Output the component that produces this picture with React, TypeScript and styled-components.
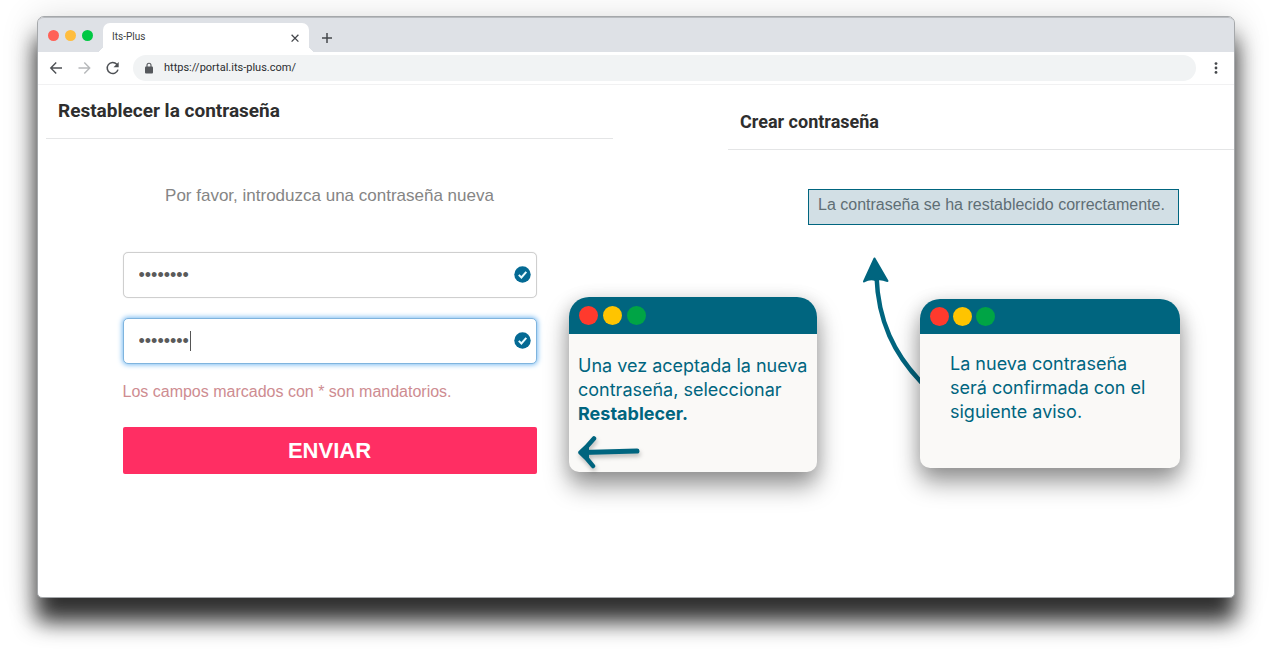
import React, { useState } from "react";
import styled, { createGlobalStyle, css } from "styled-components";

const teal = "#00657f";

const GlobalStyle = createGlobalStyle`
  *, *::before, *::after { box-sizing: border-box; }
  body {
    margin: 0;
    background: #fff;
    font-family: "Liberation Sans", Arial, sans-serif;
  }
  h1, h2, p { margin: 0; }
`;

const Page = styled.div`
  min-height: 100vh;
  padding: 16px 36px 60px 37px;
  display: flex;
  overflow: hidden;
`;

const BrowserWindow = styled.div`
  flex: 1;
  min-width: 0;
  display: flex;
  flex-direction: column;
  border: 1px solid #a5a8ab;
  border-radius: 7px 7px 5px 5px;
  background: #fff;
  box-shadow: 0 23px 22px 1px rgba(0, 0, 0, 0.8), 0 4px 34px 4px rgba(0, 0, 0, 0.12);
`;

const TabBar = styled.div`
  height: 35px;
  display: flex;
  align-items: flex-end;
  padding-left: 10px;
  background: #dee1e6;
  border-top: 1px solid #b9bcc0;
  border-radius: 6px 6px 0 0;
`;

const WindowDots = styled.div`
  display: flex;
  gap: 6px;
  padding-bottom: 11px;
  margin-right: 10px;
`;

const WindowDot = styled.span<{ $color: string }>`
  width: 11px;
  height: 11px;
  border-radius: 50%;
  background: ${(p) => p.$color};
`;

const Tab = styled.div`
  position: relative;
  width: 206px;
  height: 29px;
  display: flex;
  align-items: center;
  justify-content: space-between;
  padding: 0 9px;
  background: #fff;
  border-radius: 7px 7px 0 0;
  font: 10px/14px Roboto, sans-serif;
  color: #3c4043;

  &::before,
  &::after {
    content: "";
    position: absolute;
    bottom: 0;
    width: 7px;
    height: 7px;
  }
  &::before {
    right: 100%;
    background: radial-gradient(circle at 0 0, #dee1e6 7px, #fff 7px);
  }
  &::after {
    left: 100%;
    background: radial-gradient(circle at 100% 0, #dee1e6 7px, #fff 7px);
  }
`;

const TabTitle = styled.span`
  padding-bottom: 2px;
`;

const IconButton = styled.button`
  display: flex;
  align-items: center;
  justify-content: center;
  padding: 0;
  border: 0;
  background: none;
  color: #45484c;
`;

const NewTabButton = styled(IconButton)`
  margin: 0 0 8px 12px;
`;

const Toolbar = styled.div`
  height: 33px;
  display: flex;
  align-items: center;
  padding: 0 11px 0 10px;
  border-bottom: 1px solid #f1f1f2;
`;

const NavButtons = styled.div`
  display: flex;
  gap: 12px;
  margin-right: 13px;
`;

const AddressBar = styled.label`
  flex: 1;
  height: 26px;
  display: flex;
  align-items: center;
  gap: 11px;
  padding: 0 12px;
  margin-right: 13px;
  border-radius: 13px;
  background: #f1f3f4;
`;

const AddressInput = styled.input`
  flex: 1;
  height: 20px;
  padding: 0;
  border: 0;
  outline: 0;
  background: none;
  font: 11px/20px Roboto, sans-serif;
  color: #2b2d30;
`;

const Content = styled.main`
  flex: 1;
  display: grid;
  grid-template-columns: 523fr 44px 115px 192px 314fr;
  align-items: start;
  padding-left: 8px;
`;

const Pane = styled.section<{ $columns: string; $top?: number }>`
  grid-row: 1;
  grid-column: ${(p) => p.$columns};
  padding-top: ${(p) => p.$top ?? 0}px;
`;

const PaneTitle = styled.h1<{ $size: number }>`
  height: 54px;
  padding: 0 12px;
  border-bottom: 1px solid #e4e5e6;
  font: 700 ${(p) => p.$size}px/52px Roboto, sans-serif;
  color: #2e2e2e;
`;

const Form = styled.form`
  width: 414px;
  margin: 45px auto 0;
  display: flex;
  flex-direction: column;
`;

const Intro = styled.p`
  margin-bottom: 44px;
  font-size: 17px;
  line-height: 24px;
  text-align: center;
  color: #858585;
`;

const Fields = styled.div`
  display: flex;
  flex-direction: column;
  gap: 20px;
`;

const Field = styled.div`
  position: relative;
  height: 46px;
`;

const PasswordInput = styled.input<{ $active?: boolean }>`
  width: 100%;
  height: 100%;
  padding: 0 40px 0 15px;
  border: 1px solid #cfcfcf;
  border-radius: 5px;
  outline: 0;
  background: #fff;
  box-shadow: 0 0 1px #d8d8d8;
  font: 18px/24px "Liberation Sans", Arial, sans-serif;
  color: #5a5a5a;
  ${(p) =>
    p.$active &&
    css`
      border-color: #7fb4de;
      box-shadow: 0 0 5px 1px #7dbdf2;
      caret-color: transparent;
    `}
`;

const Caret = styled.span`
  position: absolute;
  top: 13px;
  left: 67px;
  width: 1px;
  height: 20px;
  background: #555;
`;

const ValidMark = styled.svg`
  position: absolute;
  top: 14px;
  right: 6px;
  width: 17px;
  height: 17px;
`;

const RequiredNote = styled.p`
  margin: 16px 0 23px;
  font-size: 16px;
  line-height: 24px;
  color: #ce8c91;
`;

const SubmitButton = styled.button`
  height: 47px;
  border: 0;
  border-radius: 2px;
  background: #ff2e63;
  font: 700 22px/28px "Liberation Sans", Arial, sans-serif;
  color: #fff;
`;

const SuccessMessage = styled.p`
  width: 371px;
  height: 36px;
  margin: 39px 0 0 80px;
  padding: 4px 9px;
  border: 1px solid ${teal};
  background: #d2dfe5;
  font-size: 16px;
  line-height: 22px;
  white-space: nowrap;
  color: #5f6e75;
`;

const Callout = styled.aside<{ $column: number; $width: number; $top: number }>`
  grid-row: 1;
  grid-column: ${(p) => p.$column};
  z-index: 1;
  width: ${(p) => p.$width}px;
  margin-top: ${(p) => p.$top}px;
  border-radius: 20px 20px 10px 10px;
  background: #faf9f7;
  box-shadow: 0 14px 24px rgba(0, 0, 0, 0.4), 0 2px 18px rgba(0, 0, 0, 0.12);
`;

const CalloutBar = styled.div<{ $height: number; $gap: number }>`
  height: ${(p) => p.$height}px;
  display: flex;
  align-items: center;
  gap: ${(p) => p.$gap}px;
  padding: 0 10px;
  border-radius: 20px 20px 0 0;
  background: ${teal};
`;

const CalloutDot = styled.span<{ $color: string }>`
  width: 19px;
  height: 19px;
  border-radius: 50%;
  background: ${(p) => p.$color};
`;

const CalloutBody = styled.div<{ $height: number; $left: number; $top: number }>`
  height: ${(p) => p.$height}px;
  padding: ${(p) => p.$top}px 0 0 ${(p) => p.$left}px;
  font: 18px/24px Inter, sans-serif;
  white-space: nowrap;
  color: ${teal};
`;

const BackArrow = styled.svg`
  display: block;
  margin-top: 9px;
  width: 62px;
  height: 34px;
  filter: drop-shadow(1px 3px 2px rgba(0, 0, 0, 0.25));
`;

const CurvedArrow = styled.svg`
  grid-row: 1;
  grid-column: 4;
  justify-self: end;
  width: 60px;
  height: 130px;
  margin-top: 171px;
`;

const dotColors = ["#ff3a2d", "#ffc400", "#00a445"];

function CalloutDots() {
  return (
    <>
      {dotColors.map((c) => (
        <CalloutDot key={c} $color={c} />
      ))}
    </>
  );
}

function PasswordField({ label, active }: { label: string; active?: boolean }) {
  const [value, setValue] = useState("12345678");
  return (
    <Field>
      <PasswordInput
        type="password"
        aria-label={label}
        $active={active}
        value={value}
        onChange={(e) => setValue(e.target.value)}
      />
      {active && <Caret />}
      <ValidMark viewBox="0 0 17 17" aria-hidden="true">
        <circle cx="8.5" cy="8.5" r="8.2" fill="#046a94" />
        <path d="M4.8 8.9l2.6 2.6 4.9-5.6" fill="none" stroke="#e8fbff" strokeWidth="2" />
      </ValidMark>
    </Field>
  );
}

export default function App() {
  const [url, setUrl] = useState("https://portal.its-plus.com/");
  return (
    <>
      <GlobalStyle />
      <Page>
        <BrowserWindow>
          <TabBar>
            <WindowDots>
              <WindowDot $color="#ff6157" />
              <WindowDot $color="#ffbd3e" />
              <WindowDot $color="#00c843" />
            </WindowDots>
            <Tab>
              <TabTitle>Its-Plus</TabTitle>
              <IconButton type="button" aria-label="Cerrar">
                <svg width="10" height="10" viewBox="0 0 10 10" stroke="currentColor" strokeWidth="1.3">
                  <path d="M1.6 1.8l6.8 6.8M8.4 1.8l-6.8 6.8" />
                </svg>
              </IconButton>
            </Tab>
            <NewTabButton type="button" aria-label="Nueva pestaña">
              <svg width="12" height="12" viewBox="0 0 12 12" stroke="currentColor" strokeWidth="1.5">
                <path d="M1 6h10M6 1v10" />
              </svg>
            </NewTabButton>
          </TabBar>
          <Toolbar>
            <NavButtons>
              <IconButton type="button" aria-label="Atrás">
                <svg width="16" height="16" viewBox="0 0 16 16" fill="none" stroke="#4d5054" strokeWidth="1.4">
                  <path d="M14 8H3M8.2 2.6L2.8 8l5.4 5.4" />
                </svg>
              </IconButton>
              <IconButton type="button" aria-label="Adelante">
                <svg width="16" height="16" viewBox="0 0 16 16" fill="none" stroke="#b6b8ba" strokeWidth="1.4">
                  <path d="M2.5 8h11M8.3 2.6L13.7 8l-5.4 5.4" />
                </svg>
              </IconButton>
              <IconButton type="button" aria-label="Recargar">
                <svg width="16" height="16" viewBox="0 0 16 16" fill="none" stroke="#4d5054" strokeWidth="1.5">
                  <path d="M14 9.6A5.5 5.5 0 1 1 12.8 4.3l.8.9" />
                  <path d="M14.7 2v5.2H9.5z" fill="#4d5054" stroke="none" />
                </svg>
              </IconButton>
            </NavButtons>
            <AddressBar>
              <svg width="8" height="12" viewBox="0 0 8 12" aria-hidden="true">
                <rect x="0" y="4.5" width="8" height="7" rx="1" fill="#55585c" />
                <path d="M2 5V3.2a2 2 0 0 1 4 0V5" fill="none" stroke="#55585c" strokeWidth="1.1" />
              </svg>
              <AddressInput aria-label="Dirección" value={url} onChange={(e) => setUrl(e.target.value)} />
            </AddressBar>
            <IconButton type="button" aria-label="Menú">
              <svg width="14" height="14" viewBox="0 0 14 14" fill="currentColor">
                <circle cx="7" cy="2.6" r="1.4" />
                <circle cx="7" cy="7" r="1.4" />
                <circle cx="7" cy="11.4" r="1.4" />
              </svg>
            </IconButton>
          </Toolbar>
          <Content>
            <Pane $columns="1 / 3">
              <PaneTitle $size={19}>Restablecer la contraseña</PaneTitle>
              <Form onSubmit={(e) => e.preventDefault()}>
                <Intro>Por favor, introduzca una contraseña nueva</Intro>
                <Fields>
                  <PasswordField label="Contraseña nueva" />
                  <PasswordField label="Repetir contraseña" active />
                </Fields>
                <RequiredNote>Los campos marcados con * son mandatorios.</RequiredNote>
                <SubmitButton type="submit">ENVIAR</SubmitButton>
              </Form>
            </Pane>

            <Callout $column={2} $width={248} $top={212}>
              <CalloutBar $height={37} $gap={5}>
                <CalloutDots />
              </CalloutBar>
              <CalloutBody $height={138} $left={9} $top={20}>
                <p>
                  Una vez aceptada la nueva
                  <br />
                  contraseña, seleccionar
                  <br />
                  <strong>Restablecer.</strong>
                </p>
                <BackArrow viewBox="0 0 62 34" fill="none" stroke={teal} strokeLinecap="round" aria-hidden="true">
                  <path d="M5 17.5L59 16" strokeWidth="5" />
                  <path d="M16 3.5Q9 12 2.5 17.5Q9 23 15 31" strokeWidth="4.5" strokeLinejoin="round" />
                  <path d="M2 17.5l9-7v13z" fill={teal} stroke="none" />
                </BackArrow>
              </CalloutBody>
            </Callout>

            <Pane $columns="4 / 6" $top={11}>
              <PaneTitle $size={18}>Crear contraseña</PaneTitle>
              <SuccessMessage role="status">La contraseña se ha restablecido correctamente.</SuccessMessage>
            </Pane>

            <CurvedArrow viewBox="0 0 60 130" fill="none" aria-hidden="true">
              <path d="M16.5 20C18 65 34 98 62 127" stroke={teal} strokeWidth="4.5" />
              <path d="M14.5 2.5L27.5 25Q20 22 15.5 24Q10 22 4 25.5Z" fill={teal} stroke={teal} strokeWidth="2" strokeLinejoin="round" />
            </CurvedArrow>

            <Callout $column={5} $width={260} $top={214}>
              <CalloutBar $height={35} $gap={4}>
                <CalloutDots />
              </CalloutBar>
              <CalloutBody $height={134} $left={30} $top={18}>
                <p>
                  La nueva contraseña
                  <br />
                  será confirmada con el
                  <br />
                  siguiente aviso.
                </p>
              </CalloutBody>
            </Callout>
          </Content>
        </BrowserWindow>
      </Page>
    </>
  );
}
